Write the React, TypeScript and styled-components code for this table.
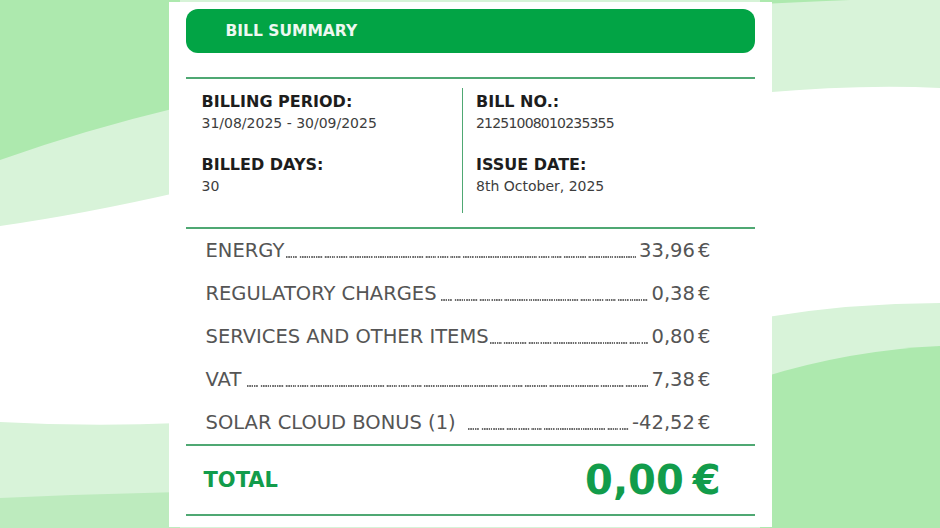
import React from "react";
import styled, { createGlobalStyle } from "styled-components";

const charges = [
    { label: "ENERGY", value: "33,96 €", lead: 2 },
    { label: "REGULATORY CHARGES", value: "0,38 €", lead: 4 },
    { label: "SERVICES AND OTHER ITEMS", value: "0,80 €", lead: 1 },
    { label: "VAT", value: "7,38 €", lead: 6 },
    { label: "SOLAR CLOUD BONUS (1)", value: "-42,52 €", lead: 12 },
];

export default function App() {
    return (
        <>
            <GlobalStyle />
            <Page>
                {/* wavy green backdrop */}
                <Backdrop viewBox="0 0 940 528" preserveAspectRatio="none" aria-hidden="true">
                    <rect x="0" y="0" width="940" height="3" fill="#d6f3d7" />
                    <rect x="0" y="525" width="940" height="3" fill="#d6f3d7" />
                    <path d="M0 0 H180 V192 Q84 214 0 226 Z" fill="#d8f3d9" />
                    <path d="M0 0 H180 V107 Q84 130 0 160 Z" fill="#ade9ae" />
                    <path d="M0 422 Q90 427 180 423 V528 H0 Z" fill="#d8f3d9" />
                    <path d="M0 498 Q90 494 180 492 V528 H0 Z" fill="#bdebbe" />
                    <path d="M760 0 H940 V88 Q860 84 760 93 Z" fill="#d8f3d9" />
                    <path d="M760 0 H850 Q800 2 760 4 Z" fill="#ade9ae" />
                    <path d="M760 318 Q850 303 940 303 V528 H760 Z" fill="#d8f3d9" />
                    <path d="M760 378 Q850 350 940 346 V528 H760 Z" fill="#ade9ae" />
                </Backdrop>

                <Card>
                    <TitleBar>BILL SUMMARY</TitleBar>

                    <Rule $top={24} />

                    {/* billing info */}
                    <InfoGrid>
                        <InfoColumn>
                            <Field>
                                <FieldLabel>BILLING PERIOD:</FieldLabel>
                                <FieldValue>31/08/2025 - 30/09/2025</FieldValue>
                            </Field>
                            <Field>
                                <FieldLabel>BILLED DAYS:</FieldLabel>
                                <FieldValue>30</FieldValue>
                            </Field>
                        </InfoColumn>
                        <InfoColumn $divided>
                            <Field>
                                <FieldLabel>BILL NO.:</FieldLabel>
                                <FieldValue $tight>21251008010235355</FieldValue>
                            </Field>
                            <Field>
                                <FieldLabel>ISSUE DATE:</FieldLabel>
                                <FieldValue>8th October, 2025</FieldValue>
                            </Field>
                        </InfoColumn>
                    </InfoGrid>

                    <Rule />

                    {/* charges */}
                    <Charges>
                        {charges.map((c) => (
                            <Charge key={c.label}>
                                <ChargeText>{c.label}</ChargeText>
                                <Leader $lead={c.lead} />
                                <ChargeValue>{c.value}</ChargeValue>
                            </Charge>
                        ))}
                    </Charges>

                    <Rule />

                    <TotalRow>
                        <TotalLabel>TOTAL</TotalLabel>
                        <TotalAmount>0,00 €</TotalAmount>
                    </TotalRow>

                    <Rule />
                </Card>
            </Page>
        </>
    );
}

/* ================== styled-components ================== */

const GlobalStyle = createGlobalStyle`
    html, body {
        margin: 0;
        padding: 0;
        background: #fff;
    }
    body {
        font-family: "DejaVu Sans", "Liberation Sans", sans-serif;
        overflow: hidden;
    }
    * {
        box-sizing: border-box;
    }
`;

const Page = styled.main`
    position: relative;
    width: 940px;
    height: 528px;
    padding-top: 2px;
    display: flex;
    justify-content: center;
    overflow: hidden;
`;

const Backdrop = styled.svg`
    position: absolute;
    inset: 0;
    width: 940px;
    height: 528px;
    z-index: 0;
`;

const Card = styled.section`
    position: relative;
    z-index: 1;
    width: 603px;
    height: 525px;
    background: #fff;
    padding: 7px 17px 0;
    display: flex;
    flex-direction: column;
`;

const TitleBar = styled.h1`
    margin: 0;
    height: 44px;
    flex-shrink: 0;
    border-radius: 12px;
    background: #02a445;
    color: #eef8f1;
    font-size: 15.5px;
    font-weight: 700;
    display: flex;
    align-items: center;
    padding-left: 40px;
`;

const Rule = styled.div<{ $top?: number }>`
    margin-top: ${({ $top }) => $top ?? 0}px;
    height: 2px;
    flex-shrink: 0;
    background: #4fa873;
`;

const InfoGrid = styled.div`
    display: grid;
    grid-template-columns: 276px 1fr;
    height: 148px;
    flex-shrink: 0;
    padding: 9px 0 14px;
`;

const InfoColumn = styled.div<{ $divided?: boolean }>`
    display: flex;
    flex-direction: column;
    gap: 22px;
    padding: 4px 0 0 ${({ $divided }) => ($divided ? 13.5 : 16)}px;
    border-left: ${({ $divided }) => ($divided ? "1.5px solid #4fa873" : "none")};
`;

const Field = styled.div`
    display: flex;
    flex-direction: column;
    gap: 1px;
`;

const FieldLabel = styled.div`
    font-size: 16px;
    font-weight: 700;
    line-height: 20px;
    color: #1d1d1d;
`;

const FieldValue = styled.div<{ $tight?: boolean }>`
    font-size: 14px;
    line-height: 20px;
    color: #3d3d3d;
    letter-spacing: ${({ $tight }) => ($tight ? "-0.8px" : "0")};
`;

const Charges = styled.ul`
    list-style: none;
    margin: 0;
    padding: 0 44px 0 20px;
`;

const Charge = styled.li`
    display: flex;
    align-items: flex-end;
    height: 43px;
    font-size: 19.5px;
    line-height: 43px;
    color: #555;
`;

const ChargeText = styled.span`
    white-space: nowrap;
`;

const ChargeValue = styled.span`
    white-space: nowrap;
    word-spacing: -3px;
`;

const Leader = styled.span<{ $lead: number }>`
    flex: 1;
    height: 1.6px;
    margin: 0 3px 14px ${({ $lead }) => $lead}px;
    background-image: linear-gradient(90deg, #6a6a6a 1.2px, transparent 1.2px);
    background-size: 2.3px 1.6px;
    background-repeat: repeat-x;
    -webkit-mask-image: repeating-linear-gradient(90deg, #000 0 11.5px, transparent 11.5px 12.6px);
    mask-image: repeating-linear-gradient(90deg, #000 0 11.5px, transparent 11.5px 12.6px);
`;

const TotalRow = styled.div`
    display: flex;
    align-items: center;
    justify-content: space-between;
    height: 67.5px;
    flex-shrink: 0;
    padding: 0 34px 0 18px;
    color: #129c4b;
    font-weight: 700;
`;

const TotalLabel = styled.span`
    font-size: 21px;
`;

const TotalAmount = styled.span`
    font-size: 40px;
    word-spacing: -5px;
`;
